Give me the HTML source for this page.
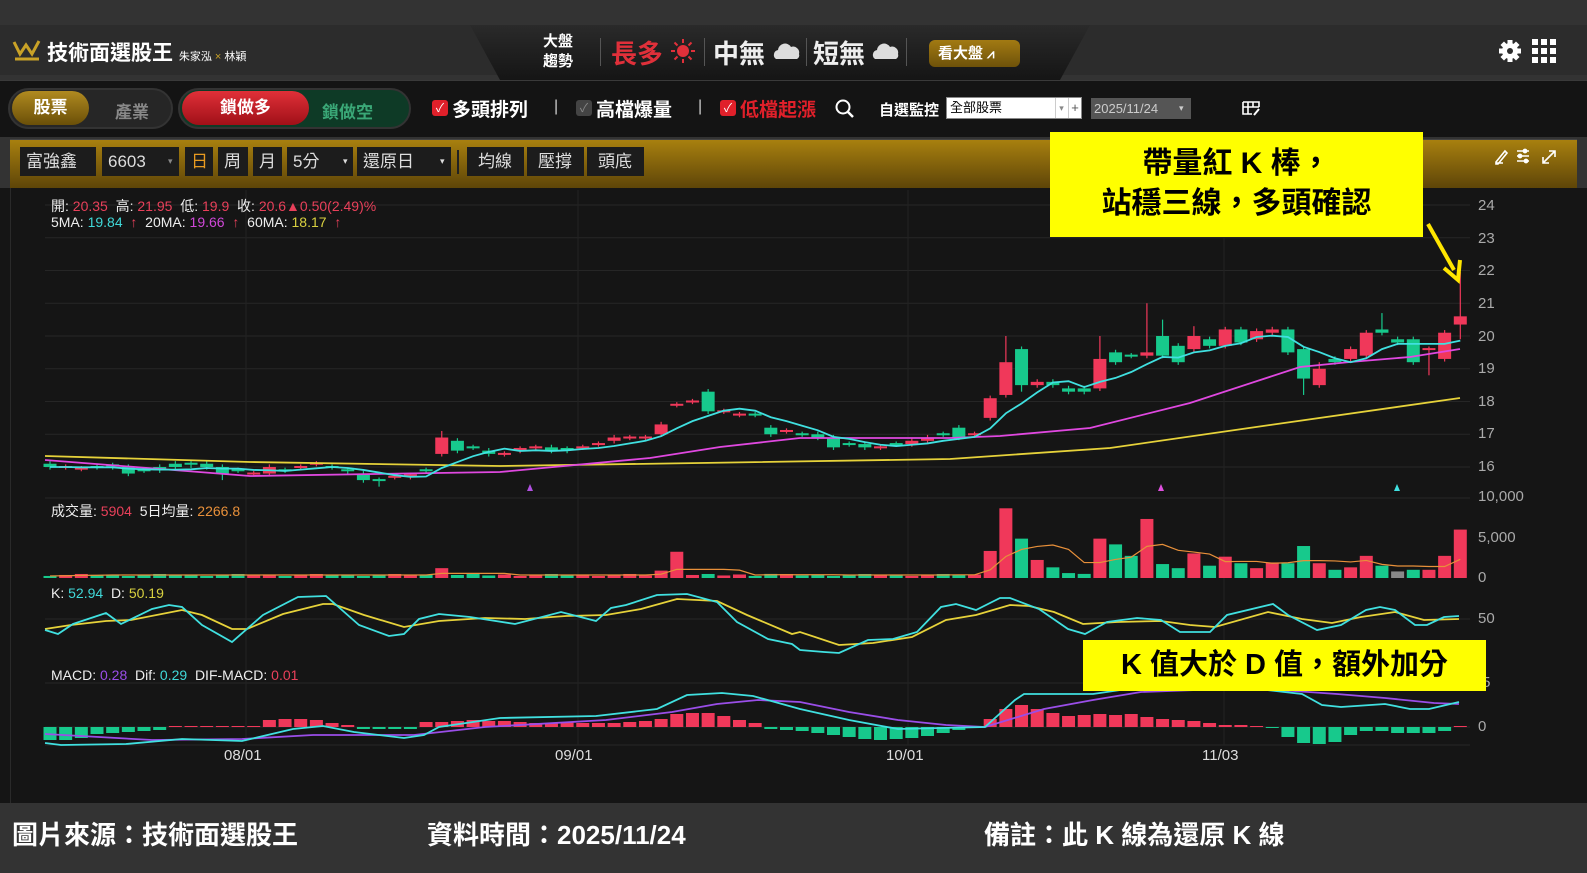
<!DOCTYPE html>
<html><head><meta charset="utf-8">
<style>
*{margin:0;padding:0;box-sizing:border-box}
body{width:1587px;height:873px;overflow:hidden;background:#333;font-family:"Liberation Sans","Noto Sans CJK TC",sans-serif;position:relative;color:#fff}
.a{position:absolute;white-space:nowrap}
.box{position:absolute;background:#1c1c1c;color:#ddd;font-size:17px;line-height:29px;padding-left:6px;top:147px;height:29px}
.cb{position:absolute;width:16px;height:16px;border-radius:3px;top:100px;font-size:12px;line-height:16px;text-align:center;color:#fff}
.lbl{position:absolute;font-size:19px;font-weight:bold;top:95px}
.ax{position:absolute;left:1478px;font-size:15px;color:#aaa}
.dt{position:absolute;top:747px;font-size:15px;color:#ddd}
.ft{position:absolute;top:815px;font-size:26px;font-weight:bold;white-space:nowrap}
</style></head><body>
<!-- header -->
<div class="a" style="left:0;top:25px;width:1587px;height:50px;background:#2c2c2c"></div>
<svg class="a" style="left:470px;top:25px" width="630" height="55"><defs><linearGradient id="tg" x1="0" y1="0" x2="0" y2="1"><stop offset="0" stop-color="#2a2a2a"/><stop offset="1" stop-color="#151515"/></linearGradient></defs><polygon points="0,0 620,0 590,55 30,55" fill="url(#tg)"/></svg>
<svg class="a" style="left:12px;top:38px" width="30" height="24"><path d="M2 4 L8 16 L14 7 L20 16 L27 3 M3 21 H27" stroke="#c9a227" stroke-width="3" fill="none"/></svg>
<div class="a" style="left:47px;top:37px;font-size:21px;font-weight:bold">技術面選股王 <span style="font-size:11px;font-weight:normal">朱家泓 <span style="color:#c9a227">×</span> 林穎</span></div>
<div class="a" style="left:543px;top:32px;font-size:15px;line-height:20px;font-weight:bold;text-align:center">大盤<br>趨勢</div>
<div class="a" style="left:600px;top:38px;width:1px;height:28px;background:#555"></div>
<div class="a" style="left:611px;top:34px;font-size:26px;font-weight:bold;color:#e0303a">長多</div>
<svg class="a" style="left:670px;top:38px" width="26" height="26"><circle cx="13" cy="13" r="6" fill="#e0303a"/><g stroke="#e0303a" stroke-width="2"><path d="M13 1v4M13 21v4M1 13h4M21 13h4M4.5 4.5l3 3M18.5 18.5l3 3M4.5 21.5l3-3M18.5 7.5l3-3"/></g></svg>
<div class="a" style="left:704px;top:38px;width:1px;height:28px;background:#555"></div>
<div class="a" style="left:713px;top:34px;font-size:26px;font-weight:bold;color:#eee">中無</div>
<svg class="a" style="left:772px;top:42px" width="30" height="18"><path d="M4 17 A5 5 0 0 1 6 8 A7 7 0 0 1 19 5 A6 6 0 0 1 27 12 A4 4 0 0 1 25 17Z" fill="#ddd"/></svg>
<div class="a" style="left:806px;top:38px;width:1px;height:28px;background:#555"></div>
<div class="a" style="left:813px;top:34px;font-size:26px;font-weight:bold;color:#eee">短無</div>
<svg class="a" style="left:871px;top:42px" width="30" height="18"><path d="M4 17 A5 5 0 0 1 6 8 A7 7 0 0 1 19 5 A6 6 0 0 1 27 12 A4 4 0 0 1 25 17Z" fill="#ddd"/></svg>
<div class="a" style="left:906px;top:38px;width:1px;height:28px;background:#555"></div>
<div class="a" style="left:929px;top:40px;width:91px;height:27px;border-radius:6px;background:linear-gradient(#a27a12,#6e520a);font-size:15px;line-height:27px;padding-left:9px;font-weight:bold">看大盤 <span style="font-size:13px">⩘</span></div>
<svg class="a" style="left:1499px;top:40px" width="22" height="22"><g fill="#fff"><rect x="8.5" y="0" width="5" height="22"/><rect x="0" y="8.5" width="22" height="5"/><rect x="8.5" y="0" width="5" height="22" transform="rotate(45 11 11)"/><rect x="8.5" y="0" width="5" height="22" transform="rotate(-45 11 11)"/><circle cx="11" cy="11" r="8"/></g><circle cx="11" cy="11" r="3" fill="#2c2c2c"/></svg>
<svg class="a" style="left:1532px;top:39px" width="24" height="24" fill="#fff"><rect x="0" y="0" width="6" height="6"/><rect x="9" y="0" width="6" height="6"/><rect x="18" y="0" width="6" height="6"/><rect x="0" y="9" width="6" height="6"/><rect x="9" y="9" width="6" height="6"/><rect x="18" y="9" width="6" height="6"/><rect x="0" y="18" width="6" height="6"/><rect x="9" y="18" width="6" height="6"/><rect x="18" y="18" width="6" height="6"/></svg>
<!-- toolbar -->
<div class="a" style="left:0;top:80px;width:1587px;height:57px;background:#141414;border-top:1px solid #3a3a3a"></div>
<div class="a" style="left:8px;top:88px;width:165px;height:41px;border-radius:21px;background:#262626;border:2px solid #333"></div>
<div class="a" style="left:12px;top:91px;width:77px;height:34px;border-radius:17px;background:linear-gradient(#b08a20,#6a4f08);font-size:17px;font-weight:bold;line-height:34px;text-align:center">股票</div>
<div class="a" style="left:115px;top:98px;font-size:17px;color:#888;font-weight:bold">產業</div>
<div class="a" style="left:178px;top:88px;width:233px;height:41px;border-radius:21px;background:#0e3a26;border:2px solid #333"></div>
<div class="a" style="left:182px;top:91px;width:127px;height:34px;border-radius:17px;background:linear-gradient(#e03038,#a01018);font-size:17px;font-weight:bold;line-height:34px;text-align:center">鎖做多</div>
<div class="a" style="left:322px;top:98px;font-size:17px;color:#3aa877;font-weight:bold">鎖做空</div>
<div class="cb" style="left:432px;background:#e0202a">✓</div><div class="lbl" style="left:452px">多頭排列</div>
<div class="a" style="left:554px;top:98px;font-size:16px;color:#ccc">|</div>
<div class="cb" style="left:576px;background:#444;color:#888">✓</div><div class="lbl" style="left:596px">高檔爆量</div>
<div class="a" style="left:698px;top:98px;font-size:16px;color:#ccc">|</div>
<div class="cb" style="left:720px;background:#e0202a">✓</div><div class="lbl" style="left:740px;color:#e0202a">低檔起漲</div>
<svg class="a" style="left:835px;top:99px" width="20" height="20"><circle cx="8" cy="8" r="6.5" stroke="#fff" stroke-width="2" fill="none"/><path d="M13 13l5 5" stroke="#fff" stroke-width="2.5"/></svg>
<div class="a" style="left:879px;top:99px;font-size:15px;font-weight:bold">自選監控</div>
<div class="a" style="left:946px;top:97px;width:136px;height:22px;background:#fff;border:1px solid #888;color:#000;font-size:13px;line-height:20px;padding-left:3px">全部股票<span style="position:absolute;left:108px;top:0;width:12px;height:20px;border-left:1px solid #ccc;color:#888;font-size:9px;text-align:center">▾</span><span style="position:absolute;left:121px;top:0;width:13px;height:20px;border-left:1px solid #ccc;color:#555;text-align:center">+</span></div>
<div class="a" style="left:1091px;top:98px;width:100px;height:21px;background:#555;color:#ccc;font-size:13px;line-height:21px;padding-left:3px">2025/11/24<span style="position:absolute;left:88px;font-size:9px">▾</span></div>
<svg class="a" style="left:1242px;top:100px" width="20" height="17"><path d="M1 2h16v5M1 2v12h9M1 7h16M6 2v12M11 2v5" stroke="#fff" stroke-width="1.6" fill="none"/><path d="M12 15l5-6" stroke="#fff" stroke-width="2"/></svg>
<!-- gold bar -->
<div class="a" style="left:10px;top:139px;width:1567px;height:49px;background:linear-gradient(#a8800f,#5e4508);border-top:1px solid #444"></div>
<div class="box" style="left:20px;width:76px">富強鑫</div>
<div class="box" style="left:102px;width:77px">6603<span style="position:absolute;left:66px;font-size:9px;color:#888">▾</span></div>
<div class="box" style="left:185px;width:28px;color:#e89a20">日</div>
<div class="box" style="left:218px;width:30px">周</div>
<div class="box" style="left:253px;width:29px">月</div>
<div class="box" style="left:287px;width:66px">5分<span style="position:absolute;left:56px;font-size:9px">▾</span></div>
<div class="box" style="left:357px;width:94px">還原日<span style="position:absolute;left:83px;font-size:9px">▾</span></div>
<div class="a" style="left:457px;top:150px;width:2px;height:24px;background:#222"></div>
<div class="box" style="left:467px;width:57px;padding-left:11px">均線</div>
<div class="box" style="left:527px;width:57px;padding-left:11px">壓撐</div>
<div class="box" style="left:587px;width:57px;padding-left:11px">頭底</div>
<svg class="a" style="left:1493px;top:147px" width="70" height="18" stroke="#fff" stroke-width="1.6" fill="none"><path d="M3 15l9-11 2 2-9 11H3zM3 16h7"/><path d="M24 4h12M24 9h12M24 14h12"/><circle cx="32" cy="4" r="1.6" fill="#fff"/><circle cx="27" cy="9" r="1.6" fill="#fff"/><circle cx="33" cy="14" r="1.6" fill="#fff"/><path d="M50 16l12-12M56 4h6v6M50 10v6h6"/></svg>
<!-- chart -->
<div class="a" style="left:0;top:188px;width:1587px;height:615px;background:#151515"></div>
<div class="a" style="left:10px;top:188px;width:1px;height:615px;background:#2a2a2a"></div>
<svg id="ch" class="a" style="left:0;top:0" width="1587" height="873"></svg>
<div class="a" style="left:51px;top:198px;font-size:14px;color:#eee;line-height:16px">開: <span style="color:#e8405a">20.35</span>&nbsp; 高: <span style="color:#e8405a">21.95</span>&nbsp; 低: <span style="color:#e8405a">19.9</span>&nbsp; 收: <span style="color:#e8405a">20.6▲0.50(2.49)%</span><br>5MA: <span style="color:#40d8d8">19.84</span>&nbsp; <span style="color:#e8405a">↑</span>&nbsp; 20MA: <span style="color:#d048d8">19.66</span>&nbsp; <span style="color:#e8405a">↑</span>&nbsp; 60MA: <span style="color:#d8d040">18.17</span>&nbsp; <span style="color:#e8405a">↑</span></div>
<div class="a" style="left:51px;top:501px;font-size:14px;color:#eee">成交量: <span style="color:#e8405a">5904</span>&nbsp; 5日均量: <span style="color:#e8903a">2266.8</span></div>
<div class="a" style="left:51px;top:585px;font-size:14px;color:#eee">K: <span style="color:#40d8d8">52.94</span>&nbsp; D: <span style="color:#d8d040">50.19</span></div>
<div class="a" style="left:51px;top:667px;font-size:14px;color:#eee">MACD: <span style="color:#9a4ee8">0.28</span>&nbsp; Dif: <span style="color:#40d8d8">0.29</span>&nbsp; DIF-MACD: <span style="color:#e8405a">0.01</span></div>
<div class="ax" style="top:197px">24</div><div class="ax" style="top:230px">23</div><div class="ax" style="top:262px">22</div><div class="ax" style="top:295px">21</div><div class="ax" style="top:328px">20</div><div class="ax" style="top:360px">19</div><div class="ax" style="top:393px">18</div><div class="ax" style="top:425px">17</div><div class="ax" style="top:458px">16</div><div class="ax" style="top:488px">10,000</div><div class="ax" style="top:529px">5,000</div><div class="ax" style="top:569px">0</div><div class="ax" style="top:610px">50</div><div class="ax" style="top:674px">.5</div><div class="ax" style="top:718px">0</div>
<div class="dt" style="left:224px">08/01</div><div class="dt" style="left:555px">09/01</div><div class="dt" style="left:886px">10/01</div><div class="dt" style="left:1202px">11/03</div>
<!-- callouts -->
<div class="a" style="left:1050px;top:132px;width:373px;height:105px;background:#ffff00;color:#000;font-size:30px;font-weight:bold;text-align:center;line-height:40px;padding-top:12px">帶量紅 K 棒，<br>站穩三線，多頭確認</div>
<svg class="a" style="left:1420px;top:220px" width="50" height="65"><path d="M8 4 L34 50" stroke="#ffe600" stroke-width="4"/><path d="M24 48 L38 60 L40 40" stroke="#ffe600" stroke-width="4" fill="none"/></svg>
<div class="a" style="left:1083px;top:640px;width:403px;height:51px;background:#ffff00;color:#000;font-size:29px;font-weight:bold;text-align:center;line-height:51px">K 值大於 D 值，額外加分</div>
<!-- footer -->
<div class="ft" style="left:12px">圖片來源：技術面選股王</div>
<div class="ft" style="left:427px">資料時間：2025/11/24</div>
<div class="ft" style="left:984px">備註：此 K 線為還原 K 線</div>
<script>
var D=[[16.1,16],[16,16],[15.95,15.95],[16,16],[16.05,16],[16,15.8],[15.9,15.9],[16,15.9],[16.1,16],[16.1,16.05],[16.1,16],[16,15.8],[15.9,15.9],[15.8,15.8],[15.8,16],[15.9,15.9],[16,16],[16.1,16.1],[16,16],[15.9,15.85],[15.8,15.6],[15.6,15.6],[15.7,15.7],[15.7,15.75],[15.9,15.9],
[16.4,16.9],[16.8,16.5],[16.6,16.6],[16.5,16.4],[16.4,16.4],[16.5,16.55],[16.6,16.6],[16.6,16.5],[16.55,16.5],[16.6,16.6],[16.7,16.7],[16.8,16.9],[16.9,16.9],[16.9,16.9],[17,17.3],[17.9,17.9],[18,18],[18.3,17.7],[17.7,17.7],[17.6,17.6],[17.6,17.6],[17.2,17],[17.1,17.1],[17,17],[17,16.9],[16.9,16.6],[16.7,16.7],[16.7,16.6],[16.6,16.6],[16.7,16.7],[16.7,16.8],[16.8,16.9],[17,17],[17.2,16.9],[17,17],
[17.5,18.1],[18.2,19.2],[19.6,18.5],[18.5,18.6],[18.6,18.5],[18.4,18.3],[18.4,18.3],[18.4,19.3],[19.5,19.2],[19.4,19.4],[19.4,19.5],[20,19.4],[19.7,19.2],[19.6,20],[19.9,19.7],[19.7,20.2],[20.2,19.8],[19.9,20.15],[20.1,20.2],[20.2,19.5],[19.6,18.7],[18.5,19],[19.3,19.2],[19.3,19.6],[19.4,20.1],[20.2,20.1],[19.9,19.8],[19.9,19.2],[19.6,19.6],[19.3,20.1],[20.35,20.6]];
var HI={25:17.1,61:20,70:21,71:20.5,85:20.7,90:21.95,73:20.3,81:19.2,67:20};var LO={80:18.2,88:18.8,62:18.3,90:19.9,21:15.4,11:15.6};
var V={25:1200,39:900,40:3200,46:500,58:400,60:3300,61:8500,62:4800,63:2200,64:1300,65:600,66:500,67:4800,68:4100,69:2700,70:7200,71:1700,72:1200,73:3000,74:1500,75:2600,76:1800,77:1200,78:1900,79:1800,80:3900,81:1800,82:1000,83:1300,84:2700,85:1500,86:800,87:1000,88:1000,89:2700,90:5904};
var H=[-13,-13,-11,-7,-6,-5,-4,-3,1,1,1,1,1,1,7,8,8,7,4,2,-2,-2,-2,-2,5,5,6,7,6,6,5,4,4,5,4,4,4,5,6,8,13,14,14,11,7,4,-2,-3,-4,-6,-8,-10,-12,-13,-12,-11,-9,-6,-3,-1,8,18,22,18,14,11,12,13,12,13,10,8,7,6,4,2,2,1,-1,-10,-16,-17,-15,-8,-4,-4,-6,-6,-6,-4,1];
var R="#f0385a",G="#17c98c",s="";
function y(p){return 467-(p-16)*32.75}
function X(i){return 50+i*15.67}
for(var p=16;p<=24;p++)s+='<line x1="45" x2="1470" y1="'+y(p)+'" y2="'+y(p)+'" stroke="#262626"/>';
[498,619,683,727,745].forEach(function(v){s+='<line x1="45" x2="1470" y1="'+v+'" y2="'+v+'" stroke="#262626"/>'});
[246,578,908,1224].forEach(function(v){s+='<line x1="'+v+'" x2="'+v+'" y1="190" y2="745" stroke="#232323"/>'});
var vs=[];
for(var i=0;i<91;i++){var o=D[i][0],c=D[i][1],x=X(i),col=c>o?R:(c<o?G:(i%3?R:G));
var h=HI[i]||Math.max(o,c)+0.08,l=LO[i]||Math.min(o,c)-0.08;
s+='<line x1="'+x+'" x2="'+x+'" y1="'+y(h)+'" y2="'+y(l)+'" stroke="'+col+'" stroke-width="1.2"/>';
var t=y(Math.max(o,c)),b=y(Math.min(o,c));if(b-t<2){t-=1;b=t+2}
s+='<rect x="'+(x-6.5)+'" y="'+t+'" width="13" height="'+(b-t)+'" fill="'+col+'"/>';
var v=V[i]||(250+((i*37)%5)*60);vs.push(v);var vh=v*0.0082;
s+='<rect x="'+(x-6.5)+'" y="'+(578-vh)+'" width="13" height="'+vh+'" fill="'+(i==86?"#888":col)+'"/>';
var hv=H[i];s+='<rect x="'+(x-6.5)+'" y="'+(hv>0?727-hv:727)+'" width="13" height="'+Math.abs(hv||1)+'" fill="'+(hv>0?R:G)+'"/>';}
function pl(pts,c,w){return '<polyline points="'+pts+'" fill="none" stroke="'+c+'" stroke-width="'+(w||1.8)+'"/>'}
var m5=[];for(i=0;i<91;i++){var sm=0;for(var k=0;k<5;k++)sm+=D[Math.max(0,i-k)][1];m5.push(X(i)+','+y(sm/5))}
var va=[];for(i=0;i<91;i++){var sm=0;for(k=0;k<5;k++)sm+=vs[Math.max(0,i-k)];va.push(X(i)+','+(578-sm/5*0.0082))}
s+=pl("45,456 250,462 500,466 700,463 950,459 1110,448 1270,425 1460,398","#e6d23a");
s+=pl("45,460 250,476 500,472 650,458 720,447 800,438 950,438 1000,436 1090,428 1190,403 1300,367 1350,362 1410,357 1460,349","#e048e0");
s+=pl(m5.join(" "),"#40e0e0");
s+=pl(va.join(" "),"#e8903a",1.2);
s+=pl("45,629 71,625 106,621 131,620 182,610 202,615 232,629 247,629 283,614 323,604 333,604 364,615 404,627 439,621 485,618 525,619 566,616 606,615 641,609 677,599 717,601 747,615 792,634 800,632 839,645 873,643 912,637 946,620 976,615 1010,605 1029,606 1054,612 1083,624 1117,622 1161,621 1190,625 1215,627 1268,612 1302,619 1332,623 1361,617 1395,612 1424,620 1459,619","#e6d23a");
s+=pl("45,630 58,634 73,624 106,613 121,624 152,609 169,605 182,607 202,625 232,642 263,615 298,597 326,596 359,625 389,636 404,634 419,619 439,614 470,617 515,624 561,612 596,621 611,608 626,605 657,595 687,594 717,602 737,622 768,639 792,644 800,650 824,652 839,653 868,640 893,639 917,632 941,607 956,604 976,610 1000,598 1010,598 1039,609 1068,629 1085,634 1107,622 1137,618 1161,620 1180,632 1210,632 1227,615 1273,604 1288,615 1317,630 1341,625 1366,610 1380,607 1395,610 1415,625 1427,625 1444,617 1459,616","#40e0e0");
s+=pl("45,734 152,740 242,739 313,735 414,735 485,727 606,720 672,712 717,704 758,700 800,702 849,712 898,720 946,725 985,727 1044,709 1093,700 1141,692 1250,688 1337,694 1385,698 1434,703 1459,704","#9a4ee8");
s+=pl("45,743 61,745 126,744 182,739 242,741 293,729 323,726 354,732 404,738 424,735 439,727 500,718 596,716 657,709 687,695 722,693 753,696 800,709 849,720 898,729 985,727 1015,700 1024,694 1093,694 1141,687 1250,688 1302,694 1322,705 1341,707 1385,704 1410,709 1429,709 1459,702","#40e0e0");
s+='<polygon points="527,491 530,484 533,491" fill="#b050e0"/><polygon points="1158,491 1161,484 1164,491" fill="#e050e0"/><polygon points="1394,491 1397,484 1400,491" fill="#40e0e0"/>';
document.getElementById("ch").innerHTML=s;
</script>
</body></html>
